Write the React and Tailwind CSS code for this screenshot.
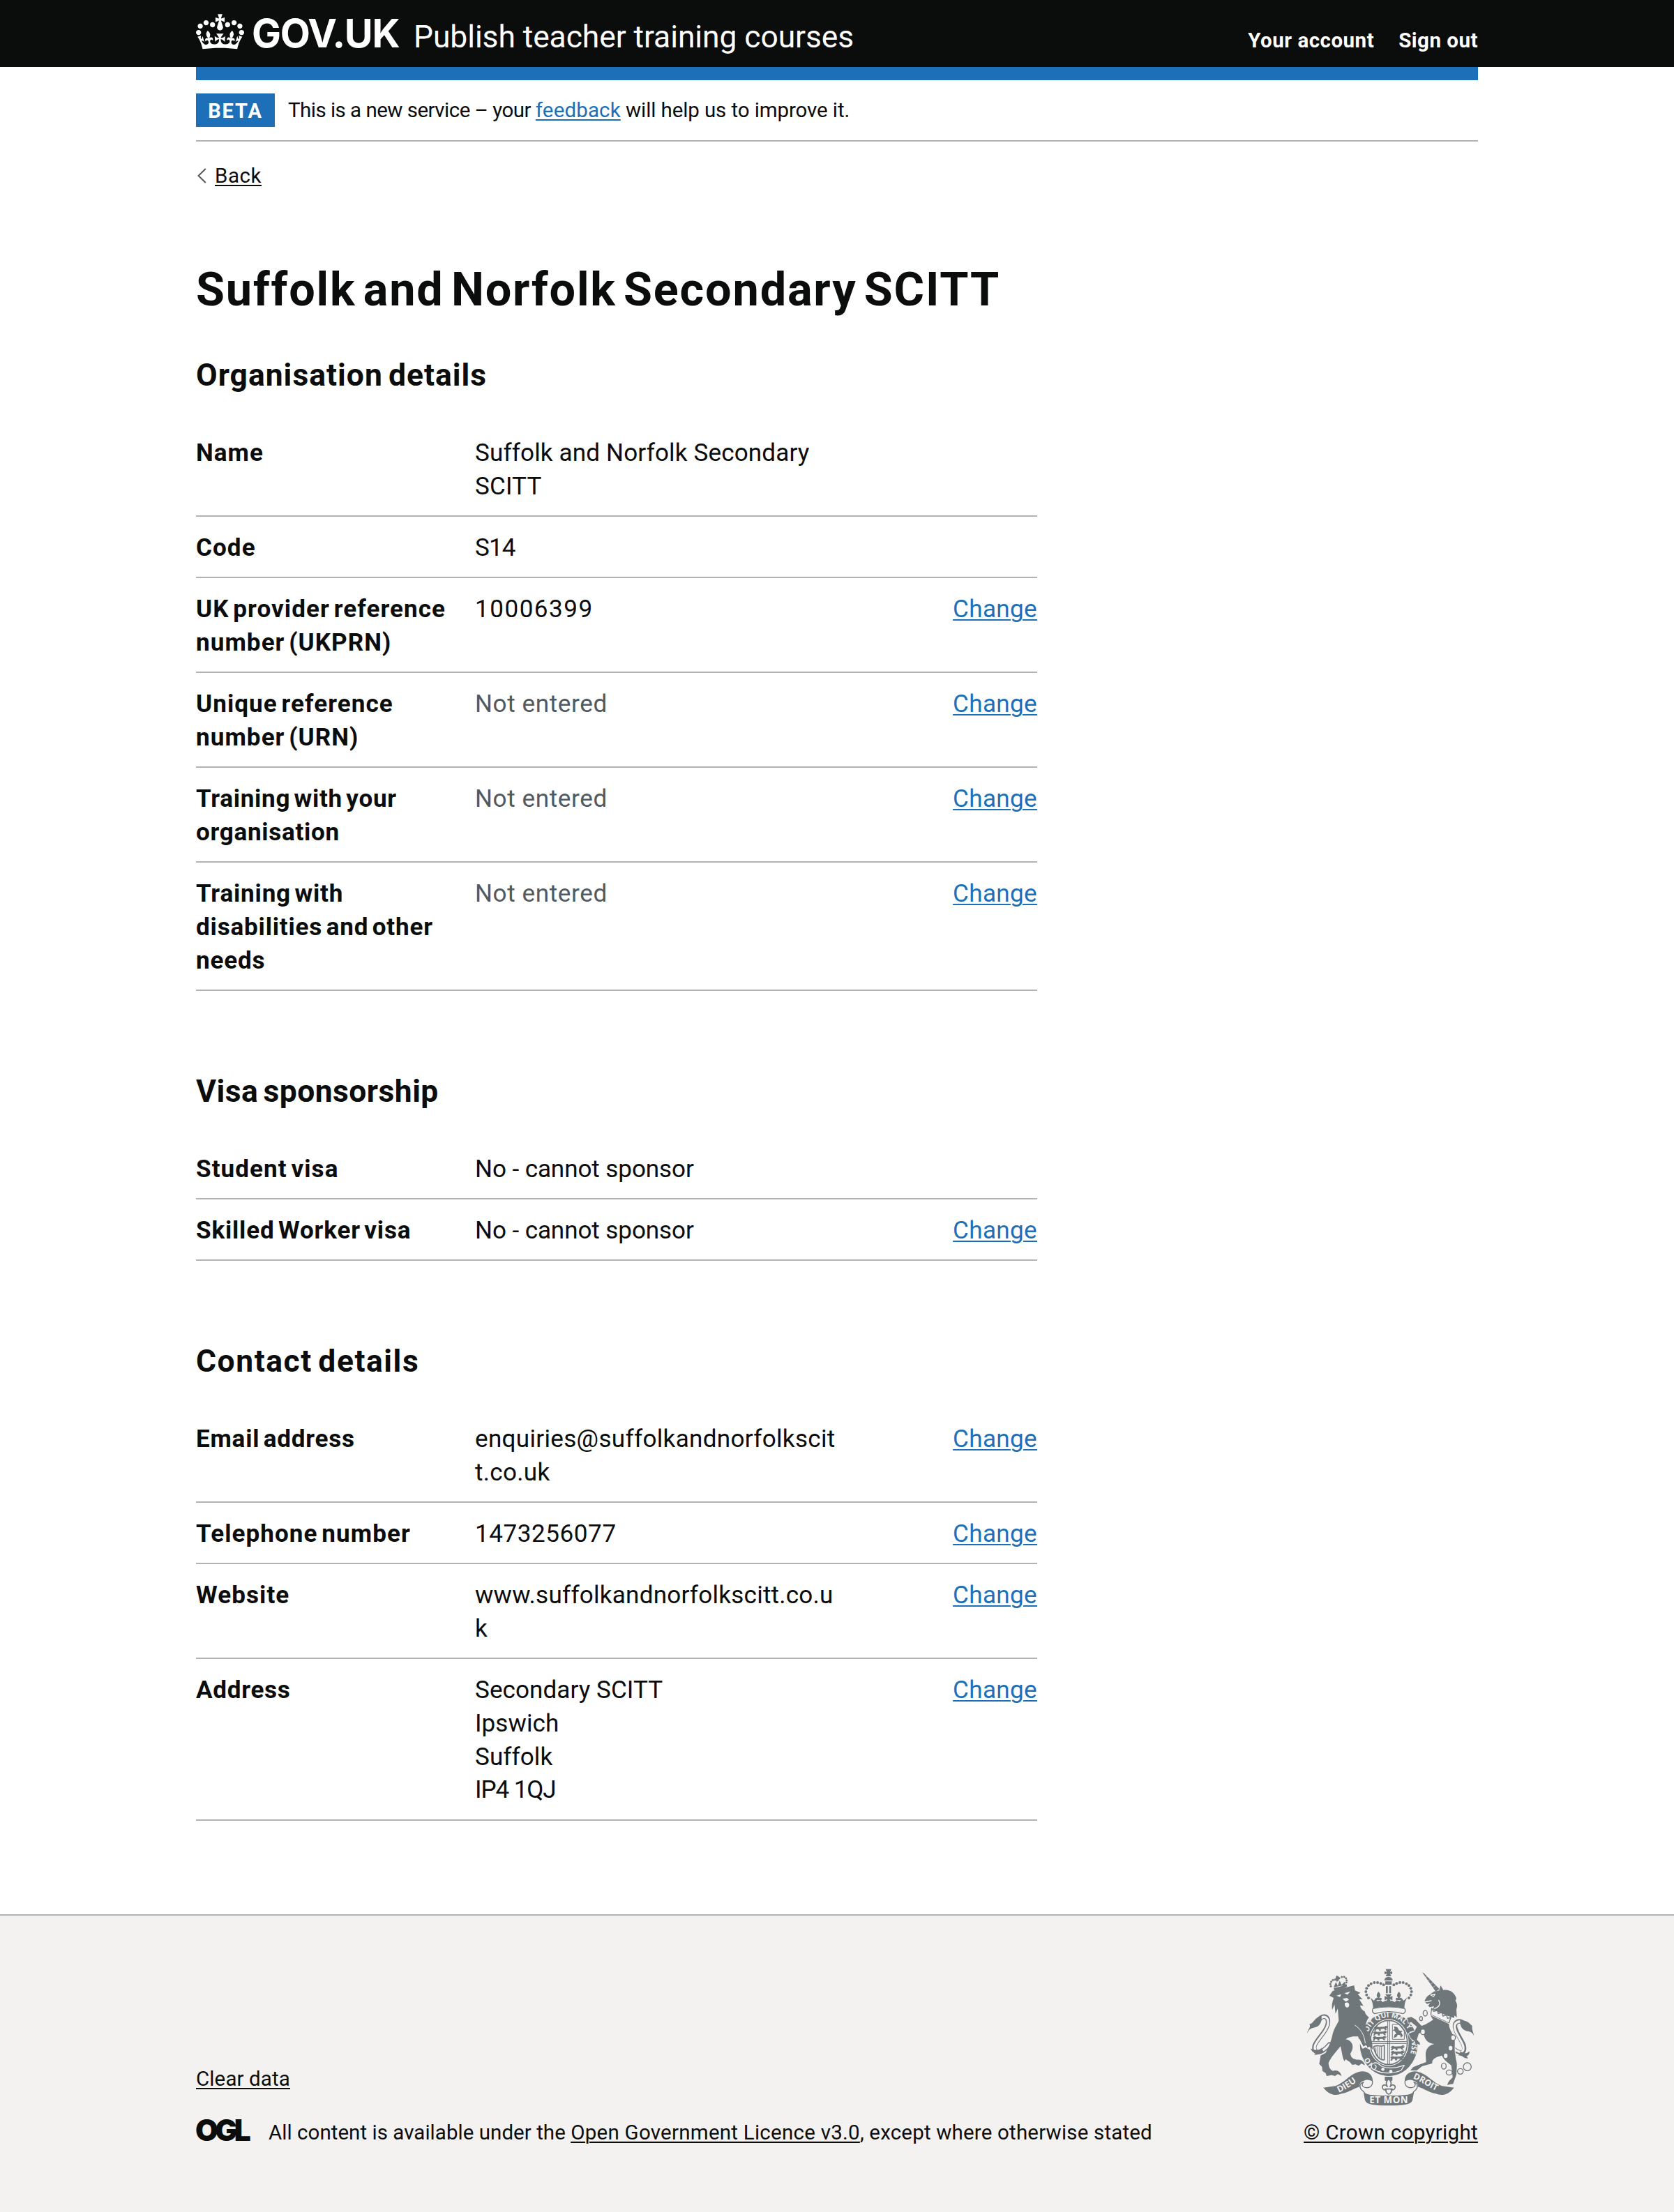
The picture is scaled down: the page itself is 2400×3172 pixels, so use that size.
import React from 'react';

const organisation = [
  { key: ['Name'], value: ['Suffolk and Norfolk Secondary', 'SCITT'], valueClass: 'tracking-[0.13px]' },
  { key: ['Code'], value: ['S14'], valueClass: 'tracking-[-0.9px]' },
  { key: ['UK provider reference', 'number (UKPRN)'], value: ['10006399'], valueClass: 'tracking-[1.5px]', change: true },
  { key: ['Unique reference', 'number (URN)'], value: ['Not entered'], muted: true, change: true },
  { key: ['Training with your', 'organisation'], value: ['Not entered'], muted: true, change: true, keyClass: 'tracking-[0.7px]' },
  { key: ['Training with', 'disabilities and other', 'needs'], value: ['Not entered'], muted: true, change: true, keyClass: 'tracking-[0.8px]' },
];

const visa = [
  { key: ['Student visa'], value: ['No - cannot sponsor'], valueClass: 'tracking-[-0.1px]' },
  { key: ['Skilled Worker visa'], value: ['No - cannot sponsor'], valueClass: 'tracking-[-0.1px]', change: true, keyClass: 'tracking-[0.8px]' },
];

const contact = [
  { key: ['Email address'], value: ['enquiries@suffolkandnorfolkscit', 't.co.uk'], valueClass: 'tracking-[0.3px]', change: true, keyClass: 'tracking-[0.75px]' },
  { key: ['Telephone number'], value: ['1473256077'], valueClass: 'tracking-[0.55px]', change: true },
  { key: ['Website'], value: ['www.suffolkandnorfolkscitt.co.u', 'k'], valueClass: 'tracking-[0.22px]', change: true },
  { key: ['Address'], value: ['Secondary SCITT', 'Ipswich', 'Suffolk', 'IP4 1QJ'], valueClass: 'tracking-[0.05px] [&>span:last-child]:tracking-[-1.1px]', change: true, keyClass: 'tracking-[0.7px]' },
];

function Lines({ items }) {
  return items.map((line) => (
    <span key={line} className="block whitespace-nowrap">{line}</span>
  ));
}

function SummaryList({ title, titleClass, rows, className }) {
  return (
    <section className={className}>
      <h2 className={`text-[44.4px] leading-[57.5px] font-bold [word-spacing:-4px] ${titleClass}`}>{title}</h2>
      <dl className="mt-[37.8px] w-[1206px] text-[35.1px] leading-[47.885px]">
        {rows.map((row) => (
          <div key={row.key[0] + row.key[1]} className="flex border-b-2 border-[#b1b4b6] pt-[20.8px] pb-[17.4px]">
            <dt className={`w-[400px] shrink-0 font-bold [word-spacing:-4px] ${row.keyClass || 'tracking-[1.05px]'}`}><Lines items={row.key} /></dt>
            <dd className={`grow ${row.muted ? 'text-[#505a5f] tracking-[0.6px]' : row.valueClass}`}>
              <Lines items={row.value} />
            </dd>
            {row.change && (
              <dd>
                <a className="text-[#1d70b8] tracking-[0.33px] underline decoration-2 underline-offset-[3px]">Change</a>
              </dd>
            )}
          </div>
        ))}
      </dl>
    </section>
  );
}

function Crown() {
  return (
    <svg viewBox="0 0 132 97" className="mt-5 h-[51px] w-[69px] self-start" fill="currentColor" fillRule="evenodd">
      <path d="M25 30.2c3.5 1.5 7.7-.2 9.1-3.7 1.5-3.6-.2-7.8-3.9-9.2-3.6-1.4-7.6.3-9.1 3.9-1.4 3.5.3 7.5 3.9 9zM9 39.5c3.6 1.5 7.8-.2 9.2-3.7 1.5-3.6-.2-7.8-3.9-9.1-3.6-1.5-7.6.2-9.1 3.8-1.4 3.5.3 7.5 3.8 9zM4.4 57.2c3.5 1.5 7.7-.2 9.1-3.8 1.5-3.6-.2-7.7-3.9-9.1-3.5-1.5-7.6.3-9.1 3.8-1.4 3.5.3 7.6 3.9 9.1zm38.3-21.4c3.5 1.5 7.7-.2 9.1-3.8 1.5-3.6-.2-7.7-3.9-9.1-3.6-1.5-7.6.3-9.1 3.8-1.3 3.6.4 7.7 3.9 9.1zm64.4-5.6c-3.6 1.5-7.8-.2-9.1-3.7-1.5-3.6.2-7.8 3.8-9.2 3.6-1.4 7.7.3 9.2 3.9 1.3 3.5-.4 7.5-3.9 9zm15.9 9.3c-3.6 1.5-7.7-.2-9.1-3.7-1.5-3.6.2-7.8 3.7-9.1 3.6-1.5 7.7.2 9.2 3.8 1.5 3.5-.3 7.5-3.8 9zm4.7 17.7c-3.6 1.5-7.8-.2-9.2-3.8-1.5-3.6.2-7.7 3.9-9.1 3.6-1.5 7.7.3 9.2 3.8 1.3 3.5-.4 7.6-3.9 9.1zM89.3 35.8c-3.6 1.5-7.8-.2-9.2-3.8-1.4-3.6.2-7.7 3.9-9.1 3.6-1.5 7.7.3 9.2 3.8 1.4 3.6-.3 7.7-3.9 9.1zM69.7 17.7l8.9 4.7V9.3l-8.9 2.8c-.2-.3-.5-.6-.9-.9L72.4 0H59.6l3.5 11.2c-.3.3-.6.5-.9.9l-8.8-2.8v13.1l8.8-4.7c.3.3.6.7.9.9l-5 15.4v.1c-.2.8-.4 1.6-.4 2.4 0 4.1 3.1 7.5 7 8.1h.2c.3 0 .7.1 1 .1.4 0 .7 0 1-.1h.2c4-.6 7.1-4.1 7.1-8.1 0-.8-.1-1.7-.4-2.4V34l-5.1-15.4c.4-.2.7-.6 1-.9zM66 92.8c16.9 0 32.8 1.1 47.1 3.2 4-16.9 8.9-26.7 14-33.5l-9.6-3.4c1 4.9 1.1 7.2 0 10.2-1.5-1.4-3-4.3-4.2-8.7L108.6 76c2.8-2 5-3.2 7.5-3.3-4.4 9.4-10 11.9-13.6 11.2-4.3-.8-6.3-4.6-5.6-7.9 1-4.7 5.7-5.9 8-.5 4.3-8.7-3-11.4-7.6-8.8 7.1-7.2 7.9-13.5 2.1-21.1-8 6.1-8.1 12.3-4.5 20.8-4.7-5.4-12.1-2.5-9.5 6.2 3.4-5.2 7.9-2 7.2 3.1-.6 4.3-6.4 7.8-13.5 7.2-10.3-.9-10.9-8-11.2-13.8 2.5-.5 7.1 1.8 11 7.3L80.2 60c-4.1 4.4-8 5.3-12.3 5.4 1.4-4.4 8-11.6 8-11.6H55.5s6.4 7.2 7.9 11.6c-4.2-.1-8-1-12.3-5.4l1.4 16.4c3.9-5.5 8.5-7.7 10.9-7.3-.3 5.8-.9 12.8-11.1 13.8-7.2.6-12.9-2.9-13.5-7.2-.7-5 3.8-8.3 7.1-3.1 2.7-8.7-4.6-11.6-9.4-6.2 3.7-8.5 3.6-14.7-4.6-20.8-5.8 7.6-5 13.9 2.2 21.1-4.7-2.6-11.9.1-7.7 8.8 2.3-5.5 7.1-4.2 8.1.5.7 3.3-1.3 7.1-5.7 7.9-3.5.7-9-1.8-13.5-11.2 2.5.1 4.7 1.3 7.5 3.3l-4.7-15.4c-1.2 4.4-2.7 7.2-4.3 8.7-1.1-3-.9-5.3 0-10.2l-9.5 3.4c5 6.9 9.9 16.7 14 33.5 14.8-2.1 30.8-3.2 47.7-3.2z" />
    </svg>
  );
}

const INK = '#6f777b';
const PAPER = '#f3f2f1';

/* Pearls along the left arch of the royal crown; the right arch mirrors them. */
const pearls = [[366, 434], [358, 421], [355, 407], [358, 393], [366, 381], [377, 373], [391, 368], [405, 368], [419, 372], [431, 378]];
const smallPearls = [[204, 384], [202, 374], [206, 364], [213, 357], [222, 355], [240, 349], [251, 344], [261, 343], [269, 349], [272, 358], [271, 367]];
const chain = [[610, 500, 9, 12], [592, 523, 6, 9], [600, 580, 10, 12], [730, 605, 10, 12], [690, 727, 10, 13], [713, 755, 13, 11], [761, 750, 12, 12], [791, 730, 17, 17]];

function HalfCrown() {
  return (
    <g>
      {pearls.map(([x, y]) => <circle key={`${x}${y}`} cx={x} cy={y} r="6" />)}
      <path d="M409 407c9 10 11 18 3 28 8-5 14 0 9 8l-24 1c-4-8 2-14 9-9-7-10-5-19 3-28z" />
      <path d="M373 432l16 14 6-8 10 10 14-4 8 8 12-6 14 4v22c-25 0-48 2-67 8-1-20-4-34-13-48z" />
    </g>
  );
}

function Scroll() {
  return (
    <g>
      <path d="M172 820l52-7c42-14 68-62 118-63 30 2 44 22 42 44-10-8-26-10-38-4-14 4-20 14-18 26-26 8-54 28-78 30-24 10-54 6-78-26z" />
      <path d="M383 792c2 22-14 30-28 28-18-2-20-16-10-24-20 6-18 24-8 34 10 8 16 14 16 30" fill="none" stroke={INK} strokeWidth="4" />
    </g>
  );
}

function SmallLion({ x, y }) {
  return (
    <g transform={`translate(${x} ${y})`}>
      <path d="M0 6c6-8 12-6 16-3l28-1c8-5 14 1 12 6l-6 2 5 6-7 1-6-6-14 1 2 6-8 1-3-7-9 1-3 7-7-1 4-8-4-5z" />
      <path d="M44 4c10-10 18-4 12 4" fill="none" stroke={INK} strokeWidth="3" />
    </g>
  );
}

function RoyalArms() {
  return (
    <svg viewBox="87 305 750 600" className="h-[200px] w-[250px]" fill={INK} strokeLinejoin="round" strokeLinecap="round">
      <defs>
        <path id="garter" d="M359 600A97 110 0 0 1 547 600A97 110 0 0 1 500 732" />
        <path id="garterLeft" d="M394 726A97 110 0 0 1 355 640" />
        <path id="dieu" d="M238 842C276 826 300 804 336 782" />
        <path id="droit" d="M556 780C600 796 630 826 690 846" />
      </defs>

      {/* crown */}
      <path d="M440 310h24l-5 13 9-4v14l-9-4 5 12h-24l5-12-10 4v-14l10 4z" />
      <path d="M434 359a18 16 0 0 1 36 0zM438 363h28v14h-28z" />
      <path d="M441 384h8v30h-8zM455 384h8v30h-8zM438 418h28l-9 12 12-4v18l-12-5 6 12h-22l6-12-12 5v-18l12 4z" />
      <HalfCrown />
      <g transform="matrix(-1 0 0 1 906 0)"><HalfCrown /></g>

      {/* garter */}
      <ellipse cx="453" cy="634" rx="124" ry="136" />
      <path d="M385 480c40-10 96-10 137 0 6 12 0 20-8 22-40-12-80-12-122 0-8-4-12-10-7-22z" fill={PAPER} stroke={INK} strokeWidth="4" />
      <ellipse cx="453" cy="626" rx="86" ry="101" fill={PAPER} />
      <ellipse cx="453" cy="626" rx="80" ry="95" fill="none" stroke={INK} strokeWidth="5" />
      <path d="M449 533v186M457 533v186M374 622h158M374 630h158" stroke={INK} strokeWidth="3" />
      <SmallLion x={390} y={556} />
      <SmallLion x={386} y={577} />
      <SmallLion x={384} y={599} />
      <SmallLion x={462} y={640} />
      <SmallLion x={462} y={662} />
      <SmallLion x={460} y={684} />
      <path d="M470 548h28l22 28v36h-50z" fill="none" stroke={INK} strokeWidth="3" />
      <path d="M476 556l14 4 8 14 16 2-8 6 8 14-8 10-4-12-10-2-6 10-12 4 4-14 8-4-8-12-8-2 8-6z" />
      <path d="M388 644c16-12 26 4 46-6v62c-14 4-38-12-46-56z" fill="none" stroke={INK} strokeWidth="5" />
      <path d="M398 648v26M406 646v40M414 646v46M422 646v50" stroke={INK} strokeWidth="3" />
      <g fill={PAPER} fontFamily='"Open Sans", "Noto Sans", sans-serif' fontWeight="700">
        <text fontSize="31"><textPath href="#garter">SOIT QUI MAL Y PENSE</textPath></text>
        <text fontSize="31"><textPath href="#garterLeft">HO</textPath></text>
      </g>
      <path d="M386 716c14-8 24 2 36 12 22 10 60 10 98-4l-14 22c-40 16-84 14-112-2-18-4-20-22-8-28z" stroke={PAPER} strokeWidth="4" />
      <path d="M393 722c10 4 6 16-2 20" fill="none" stroke={PAPER} strokeWidth="4" />
      <circle cx="428" cy="741" r="7" fill={PAPER} />
      <circle cx="462" cy="750" r="7" fill={PAPER} />
      <path d="M436 773h33v16l-16 8-17-8z" />
      <path d="M453 782c14 14 12 22 6 34 12-16 26-4 20 8-4 8-14 6-16 2 6 8-2 22-10 22s-16-14-10-22c-2 4-12 6-16-2-6-12 8-24 20-8-6-12-8-20 6-34zM438 826h30" fill={PAPER} stroke={INK} strokeWidth="5" />

      {/* lion */}
      <path d="M198 634C150 690 128 664 134 640C142 612 196 570 192 532C188 508 168 512 158 522" fill="none" stroke={INK} strokeWidth="19" />
      <path d="M198 634C150 688 130 664 136 640C143 613 197 571 192 533C188 512 170 513 160 522" fill="none" stroke={PAPER} strokeWidth="10" />
      <path d="M102 588c2-20 18-26 10-42 20 0 18-28 52-34 4 26-10 48-34 50-14 4-22 8-28 26zM118 652c14 6 34 12 48-4 0 14 8 16 12 20-18-2-26 14-46 10l10-8c-14 0-22-8-24-18z" />
      {smallPearls.map(([x, y]) => <circle key={`${x}${y}`} cx={x} cy={y} r="4.5" />)}
      <path d="M228 338l8 2 6 8-6 14-8 2-4-14zM216 391c20-2 38-8 56-16l2 10c-18 10-36 15-55 17zM216 388l10-22 8 16 8-22 8 18 14-14 4 14z" />
      <path d="M330 514l28 6c-16 16-22 34-14 50 12 12 18 30 22 54l4 28-16-10-12 6-20-40-30-60z" stroke={PAPER} strokeWidth="8" />
      <path d="M198 424l14-20 92-24 4 22 24 10-12 6 20 22-14 0 18 28-14-2c2 14 12 22 20 26 2 14 14 22 18 26l-6 8c-10 20-10 36-2 50 12 12 18 30 22 54l2 26-12-12-12 4 0-20-14-6-6-16-16 4-2-10c-16 0-36-2-54 12 32 6 38 36 20 62 4 22 14 22 30 26 16-2 30 8 32 24l-14-8-12 10-14-6-14 2-10-12-18-12-6 8-6-14-10-50c-18 22-42 48-52 72 2 16 4 26 18 34 20-6 34 4 38 22l-16-8-12 8-14-4-22 4-4-12-14-10-2-18-12-12 4-22 2-14 22-12c12-26 24-48 30-82 4-18 16-36 26-56l-4-52-10 22-4-40-10 24c-4-30 4-40 6-52z" />
      <path d="M228 424l20-6-4 12zM262 414l26-8-12 14zM254 438l20-4 8 8-14 8zM264 456c14-8 22 2 18 14-6 10-20 6-18-14z" fill={PAPER} />
      <path d="M308 552c24 14 40 40 44 76" fill="none" stroke={PAPER} strokeWidth="3" />

      {/* unicorn */}
      <path d="M716 640C770 690 782 664 776 640C768 612 728 570 740 544C752 528 770 534 778 548" fill="none" stroke={INK} strokeWidth="19" />
      <path d="M716 639C768 686 778 663 773 640C765 613 726 571 739 546C751 530 768 534 776 548" fill="none" stroke={PAPER} strokeWidth="10" />
      <path d="M820 597c-4-18-10-26-8-42-12-14-22-24-52-26-2 24 8 44 32 48 14 2 22 8 28 20zM800 664c-12 10-26 12-40-2 2 12-4 16-8 20 18-4 22 14 42 12l-6-10c8-2 14-12 12-20z" />
      <path d="M597 324l8 4 66 68-16 10z" />
      <path d="M612 345l8-3M622 359l8-4M633 374l9-5M643 388l10-6" stroke={PAPER} strokeWidth="1.5" />
      <path d="M608 444l10-16 30-22 22-4 6-22 12 20c30-4 50 14 56 36l-4 10c10 16 8 26 4 38l2 34-10-8-2 10c-30-10-62-22-92-36l6-14-18 4-8-6 10-12-14 4-10-8z" />
      <path d="M634 422l18-4-6 10zM606 452l30-6M668 444c10 18 0 30-18 36" fill="none" stroke={PAPER} strokeWidth="4" />
      <path d="M638 478l8 14 16-4 4 14 16-6 4 16 16-4 4 14 14-4-8 24-78-36z" fill={PAPER} stroke={INK} strokeWidth="4" />
      <path d="M632 508l80 38c0 20 12 36 22 56 8 30-2 50 6 78 0 20 8 30 6 48l-2 36-14 40-26 4 8-16 16-16-6-52c-18-14-34-26-40-42-26 6-44 14-42 34l-44 12-22 18-28 0 12-14 24-10 32-12-2-26c-2-24 8-46 38-52-30-2-46-18-48-56l-20 12-8 26 12 12 2 10-10-4-8 6-6-18-16-12-10-20 26-10 10-20-24-20-12 4-6-22 18-4 18 10 26 28c14-2 32-14 50-26z" stroke={PAPER} strokeWidth="5" paintOrder="stroke" />
      {chain.map(([x, y, rx, ry]) => <ellipse key={`${x}${y}`} cx={x} cy={y} rx={rx} ry={ry} fill={PAPER} stroke={INK} strokeWidth="4" />)}
      <ellipse cx="719" cy="650" rx="8" ry="10" fill={PAPER} />
      <ellipse cx="698" cy="683" rx="8" ry="10" fill={PAPER} />

      {/* motto scroll */}
      <Scroll />
      <g transform="matrix(-1 0 0 1 906 0)"><Scroll /></g>
      <path d="M343 832c6 18 32 22 110 22s104-4 110-22l-8 42c-6 18-34 23-102 23s-96-5-102-23z" />
      <g fill={PAPER} fontFamily='"Open Sans", "Noto Sans", sans-serif' fontWeight="700">
        <text x="453" y="888" fontSize="40" textAnchor="middle" textLength="166">ET MON</text>
        <text fontSize="38"><textPath href="#dieu">DIEU</textPath></text>
        <text fontSize="37"><textPath href="#droit">DROIT</textPath></text>
      </g>
    </svg>
  );
}

export default function App() {
  return (
    <div className="flex h-[3172px] w-[2400px] flex-col overflow-hidden bg-white font-[Roboto,Arial,sans-serif] text-[#0b0c0c]">
      <header className="h-24 shrink-0 bg-[#0b0c0c] text-white">
        <div className="mx-auto flex h-24 w-[1838px] items-baseline">
          <Crown />
          <span className="ml-[11px] w-[231px] font-[Inter,sans-serif] text-[56px] leading-[96px] font-bold tracking-[-1.3px]">GOV.UK</span>
          <span className="ml-px text-[44.4px] tracking-[-0.08px]">Publish teacher training courses</span>
          <nav className="ml-auto flex gap-[35px] text-[29.5px] font-bold tracking-[0.5px]">
            <a>Your account</a>
            <a>Sign out</a>
          </nav>
        </div>
      </header>

      <div className="mx-auto w-[1838px]">
        <div className="h-[19px] bg-[#1d70b8]" />
        <div className="flex border-b-2 border-[#b1b4b6] py-[19px]">
          <strong className="h-12 w-[113px] bg-[#1d70b8] pt-[3px] text-center text-[29px] leading-[45px] font-bold tracking-[1.9px] text-white">BETA</strong>
          <p className="ml-[19px] text-[29.5px] leading-[48px] tracking-[-0.52px]">
            This is a new service – your{' '}
            <a className="text-[#1d70b8] tracking-[0.14px] underline decoration-2 underline-offset-[3px]">feedback</a>
            <span className="tracking-[-0.1px]"> will help us to improve it.</span>
          </p>
        </div>

        <div className="mt-[29.5px] flex items-center text-[29.5px] leading-[38.3px]">
          <svg viewBox="0 0 15 22" className="h-[22px] w-[15px]" fill="none" stroke="#505a5f" strokeWidth="2">
            <path d="M13.8 1L3.5 11l10.3 10" />
          </svg>
          <a className="ml-3 tracking-[0.54px] underline decoration-2 underline-offset-[3px]">Back</a>
        </div>

        <main>
          <h1 className="mt-[106px] text-[66.6px] leading-[76.6px] font-bold tracking-[1.8px] [word-spacing:-8px]">Suffolk and Norfolk Secondary SCITT</h1>
          <SummaryList title="Organisation details" titleClass="tracking-[1.03px]" rows={organisation} className="mt-[56.7px]" />
          <SummaryList title="Visa sponsorship" titleClass="tracking-[0.45px]" rows={visa} className="mt-[115.5px]" />
          <SummaryList title="Contact details" titleClass="tracking-[1.55px]" rows={contact} className="mt-[115.5px]" />
        </main>
      </div>

      <footer className="mt-auto h-[427px] shrink-0 border-t-2 border-[#b1b4b6] bg-[#f3f2f1] text-[29.5px] leading-[38.3px]">
        <div className="mx-auto flex h-[330.2px] w-[1838px] items-end justify-between">
          <div>
            <a className="tracking-[0.12px] underline decoration-2 underline-offset-[3px]">Clear data</a>
            <div className="mt-[38.5px] flex">
              <svg viewBox="0 0 79 32" className="h-8 w-[79px] overflow-visible" fill="currentColor">
                <text x="-1" y="31.2" fontFamily="Inter, sans-serif" fontSize="42.5" fontWeight="900" letterSpacing="-4.6">OGL</text>
              </svg>
              <p className="ml-[25px] tracking-[0.04px]">
                All content is available under the{' '}
                <a className="tracking-[0.25px] underline decoration-2 underline-offset-[3px]">Open Government Licence v3.0</a>
                <span className="tracking-[0.18px]">, except where otherwise stated</span>
              </p>
            </div>
          </div>
          <div className="flex flex-col items-end">
            <RoyalArms />
            <a className="mt-[16.6px] tracking-[0.33px] underline decoration-2 underline-offset-[3px]">© Crown copyright</a>
          </div>
        </div>
      </footer>
    </div>
  );
}
